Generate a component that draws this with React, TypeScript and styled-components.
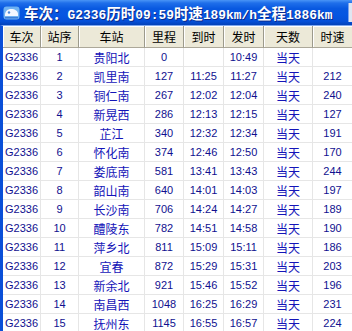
import React from "react";
import styled, { createGlobalStyle } from "styled-components";

const Global = createGlobalStyle`
  html, body { margin: 0; padding: 0; background: #fff; }
  body { font-family: "Liberation Sans", "Noto Sans CJK SC", sans-serif; }
`;

const COLS = "38px 38px 66px 39px 40px 40px 49px 40px";

const Window = styled.div`
  width: 352px;
  height: 331px;
  overflow: hidden;
  background: #fff;
  display: flex;
  flex-direction: column;
`;

const TitleBar = styled.div`
  height: 25px;
  flex: none;
  display: flex;
  align-items: center;
  padding-left: 3px;
  gap: 4px;
  background: linear-gradient(
    180deg,
    #4a95f6 0%,
    #1f6fea 12%,
    #0858e0 35%,
    #0556e2 60%,
    #0550d8 85%,
    #0342b8 100%
  );
  color: #fff;
  white-space: nowrap;
`;

const TitleText = styled.div`
  display: flex;
  align-items: baseline;
  font-weight: bold;
  text-shadow: 1px 1px 0 #0a2a8c;
`;

const Cjk = styled.span`
  font-family: "Noto Sans CJK SC", sans-serif;
  font-size: 14.5px;
  font-weight: bold;
`;

const Mono = styled.span`
  font-family: "Liberation Mono", monospace;
  font-size: 12.9px;
  font-weight: bold;
`;

const EdgeButton = styled.div`
  margin-left: auto;
  width: 3px;
  height: 19px;
  background: #dfe6f2;
  border-left: 1px solid #7aa3ee;
`;

const Body = styled.div`
  flex: 1;
  display: flex;
  border-left: 3px solid #0a4fd8;
  border-top: 1px solid #7fa8ee;
`;

const Grid = styled.div`
  display: grid;
  grid-template-columns: ${COLS};
  grid-auto-rows: 19px;
  grid-template-rows: 22px;
  align-content: start;
`;

const HeaderCell = styled.div`
  background: #ece9d8;
  border-right: 1px solid #9c9a8c;
  border-bottom: 1px solid #aca899;
  box-shadow: inset 1px 0 0 #fff, inset 0 1px 0 #fff;
  display: flex;
  align-items: center;
  justify-content: center;
  font-family: "Noto Sans CJK SC", sans-serif;
  font-size: 12px;
  color: #000;
`;

const Cell = styled.div<{ $cjk?: boolean }>`
  border-right: 1px solid #e6e6e6;
  border-bottom: 1px solid #e6e6e6;
  display: flex;
  align-items: center;
  justify-content: center;
  font-family: ${(p) =>
    p.$cjk ? '"Noto Sans CJK SC", sans-serif' : '"Liberation Sans", sans-serif'};
  font-size: ${(p) => (p.$cjk ? "12px" : "11px")};
  color: ${(p) => (p.$cjk ? "#1414b8" : "#10108f")};
  white-space: nowrap;
  overflow: hidden;
`;

const Icon = () => (
  <svg width="17" height="16" viewBox="0 0 17 16">
    <rect x="0.5" y="1.5" width="16" height="13" rx="3" fill="#6fb2f2" />
    <path
      d="M2 10 C2 6 5 4 8 4 C12 4 15 6 15 9 L15 11 L2 11 Z"
      fill="#f4f8ff"
    />
    <circle cx="6" cy="7.5" r="1.2" fill="#4a86d8" />
    <rect x="2" y="12" width="13" height="1.5" fill="#3f7fd6" />
  </svg>
);

type Row = [string, string, string, string, string, string];

const rows: Row[] = [
  ["贵阳北", "0", "", "10:49", "当天", ""],
  ["凯里南", "127", "11:25", "11:27", "当天", "212"],
  ["铜仁南", "267", "12:02", "12:04", "当天", "240"],
  ["新晃西", "286", "12:13", "12:15", "当天", "127"],
  ["芷江", "340", "12:32", "12:34", "当天", "191"],
  ["怀化南", "374", "12:46", "12:50", "当天", "170"],
  ["娄底南", "581", "13:41", "13:43", "当天", "244"],
  ["韶山南", "640", "14:01", "14:03", "当天", "197"],
  ["长沙南", "706", "14:24", "14:27", "当天", "189"],
  ["醴陵东", "782", "14:51", "14:58", "当天", "190"],
  ["萍乡北", "811", "15:09", "15:11", "当天", "186"],
  ["宜春", "872", "15:29", "15:31", "当天", "203"],
  ["新余北", "921", "15:46", "15:52", "当天", "196"],
  ["南昌西", "1048", "16:25", "16:29", "当天", "231"],
  ["抚州东", "1145", "16:55", "16:57", "当天", "224"],
];

const headers = ["车次", "站序", "车站", "里程", "到时", "发时", "天数", "时速"];

export default function App() {
  return (
    <>
      <Global />
      <Window>
        <TitleBar>
          <Icon />
          <TitleText>
            <Cjk>车次：</Cjk>
            <Mono>G2336</Mono>
            <Cjk>历时</Cjk>
            <Mono>09:59</Mono>
            <Cjk>时速</Cjk>
            <Mono>189km/h</Mono>
            <Cjk>全程</Cjk>
            <Mono>1886km</Mono>
          </TitleText>
          <EdgeButton />
        </TitleBar>
        <Body>
          <Grid>
            {headers.map((h) => (
              <HeaderCell key={h}>{h}</HeaderCell>
            ))}
            {rows.map((r, i) => (
              <React.Fragment key={i}>
                <Cell>G2336</Cell>
                <Cell>{i + 1}</Cell>
                <Cell $cjk>{r[0]}</Cell>
                <Cell>{r[1]}</Cell>
                <Cell>{r[2]}</Cell>
                <Cell>{r[3]}</Cell>
                <Cell $cjk>{r[4]}</Cell>
                <Cell>{r[5]}</Cell>
              </React.Fragment>
            ))}
          </Grid>
        </Body>
      </Window>
    </>
  );
}
